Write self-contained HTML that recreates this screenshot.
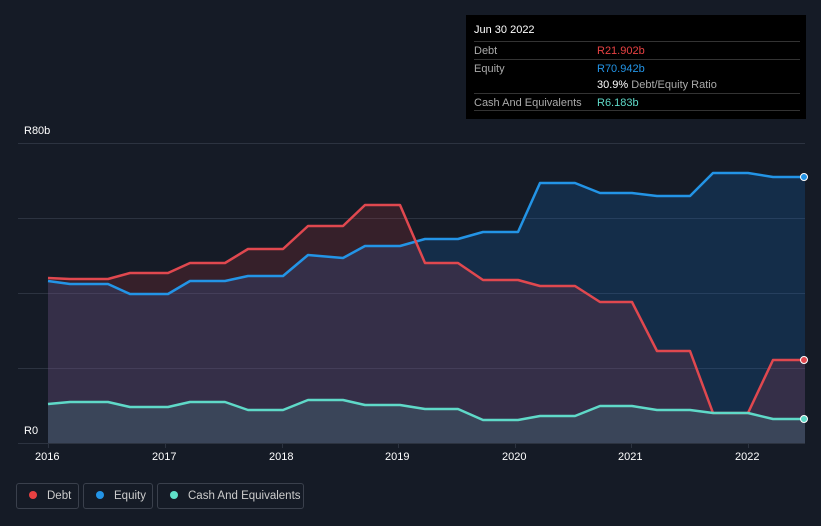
<!DOCTYPE html>
<html><head><meta charset="utf-8"><style>
body{margin:0;background:#151b26;width:821px;height:526px;overflow:hidden;font-family:"Liberation Sans",sans-serif;position:relative}
.tip{position:absolute;left:466px;top:15px;width:340px;height:104px;background:#000;color:#fff;font-size:11px}
.row{position:absolute;left:8px;right:6px;border-top:1px solid #333;height:18px;line-height:18px}
.l{color:#aaa;position:absolute;left:0}.v{position:absolute;left:123px}
.leg{position:absolute;top:483px;height:26px;border:1px solid #3a404c;border-radius:3px;color:#ccc;font-size:11.5px;line-height:24px;box-sizing:border-box;white-space:nowrap}
.dot{display:inline-block;width:8px;height:8px;border-radius:50%;margin:0 10px 0 12px;vertical-align:0px}
.ax{position:absolute;color:#fff;font-size:11px}
</style></head><body>
<svg width="821" height="526" style="position:absolute;left:0;top:0">
<g stroke="#2c3340" stroke-width="1"><line x1="18" y1="143.5" x2="805" y2="143.5"/><line x1="18" y1="218.5" x2="805" y2="218.5"/><line x1="18" y1="293.5" x2="805" y2="293.5"/><line x1="18" y1="368.5" x2="805" y2="368.5"/><line x1="18" y1="443.5" x2="805" y2="443.5"/></g>
<path fill="rgba(20,110,200,0.22)" d="M48,281 L70,284 108,284 130,294 168,294 190,281 225,281 248,276 283,276 308,255 343,258 365,246 400,246 425,239 458,239 483,232 518,232 540,183 575,183 600,193 632,193 657,196 690,196 713,173 748,173 773,177 805,177 L805,443 48,443Z"/>
<path fill="rgba(232,65,66,0.16)" d="M48,278 L70,279 108,279 130,273 168,273 190,263 225,263 248,249 283,249 308,226 343,226 365,205 400,205 425,263 458,263 483,280 518,280 540,286 575,286 600,302 632,302 657,351 690,351 713,413 748,413 773,360 805,360 L805,443 48,443Z"/>
<path fill="rgba(100,230,210,0.12)" d="M48,404 L70,402 108,402 130,407 168,407 190,402 225,402 248,410 283,410 308,400 343,400 365,405 400,405 425,409 458,409 483,420 518,420 540,416 575,416 600,406 632,406 657,410 690,410 713,413 748,413 773,419 805,419 L805,443 48,443Z"/>
<g fill="none" stroke-width="2.5" stroke-linejoin="round">
<path stroke="#2394e6" d="M48,281 L70,284 108,284 130,294 168,294 190,281 225,281 248,276 283,276 308,255 343,258 365,246 400,246 425,239 458,239 483,232 518,232 540,183 575,183 600,193 632,193 657,196 690,196 713,173 748,173 773,177 805,177"/>
<path stroke="#e0484f" d="M48,278 L70,279 108,279 130,273 168,273 190,263 225,263 248,249 283,249 308,226 343,226 365,205 400,205 425,263 458,263 483,280 518,280 540,286 575,286 600,302 632,302 657,351 690,351 713,413 748,413 773,360 805,360"/>
<path stroke="#5fd9c8" d="M48,404 L70,402 108,402 130,407 168,407 190,402 225,402 248,410 283,410 308,400 343,400 365,405 400,405 425,409 458,409 483,420 518,420 540,416 575,416 600,406 632,406 657,410 690,410 713,413 748,413 773,419 805,419"/>
</g>
<g stroke="#fff" stroke-width="1"><circle cx="804" cy="177" r="3.5" fill="#2394e6"/><circle cx="804" cy="360" r="3.5" fill="#e0484f"/><circle cx="804" cy="419" r="3.5" fill="#5fd9c8"/></g>
<g fill="#2c3340"><rect x="48" y="443" width="1" height="5"/><rect x="165" y="443" width="1" height="5"/><rect x="282" y="443" width="1" height="5"/><rect x="398" y="443" width="1" height="5"/><rect x="515" y="443" width="1" height="5"/><rect x="631" y="443" width="1" height="5"/><rect x="748" y="443" width="1" height="5"/></g>
</svg>
<div class="ax" style="left:24px;top:125px">R80b</div>
<div class="ax" style="left:24px;top:425px">R0</div>
<div class="ax" style="left:35px;top:451px">2016</div>
<div class="ax" style="left:152px;top:451px">2017</div>
<div class="ax" style="left:269px;top:451px">2018</div>
<div class="ax" style="left:385px;top:451px">2019</div>
<div class="ax" style="left:502px;top:451px">2020</div>
<div class="ax" style="left:618px;top:451px">2021</div>
<div class="ax" style="left:735px;top:451px">2022</div>
<div class="tip">
<div style="position:absolute;left:8px;top:9px">Jun 30 2022</div>
<div class="row" style="top:26px"><span class="l">Debt</span><span class="v" style="color:#e84142">R21.902b</span></div>
<div class="row" style="top:44px"><span class="l">Equity</span><span class="v" style="color:#2394e6">R70.942b</span></div>
<div class="row" style="top:61px;border-top:none"><span class="v"><span style="color:#fff">30.9%</span> <span style="color:#aaa">Debt/Equity Ratio</span></span></div>
<div class="row" style="top:78px"><span class="l">Cash And Equivalents</span><span class="v" style="color:#5fd9c8">R6.183b</span></div>
<div class="row" style="top:95px;height:0"></div>
</div>
<div class="leg" style="left:16px;width:63px"><span class="dot" style="background:#e84142"></span>Debt</div>
<div class="leg" style="left:83px;width:70px"><span class="dot" style="background:#2394e6"></span>Equity</div>
<div class="leg" style="left:157px;width:147px"><span class="dot" style="background:#5fe0c8"></span>Cash And Equivalents</div>
</body></html>
